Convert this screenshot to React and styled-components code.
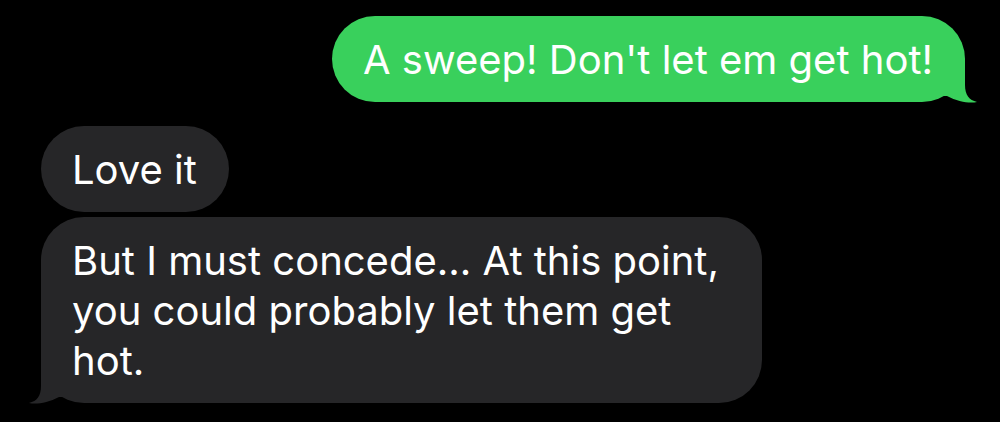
import React from 'react';
import styled, { createGlobalStyle } from 'styled-components';

const GlobalStyle = createGlobalStyle`
  html, body {
    margin: 0;
    padding: 0;
    background: #000;
  }
`;

const Thread = styled.div`
  width: 1000px;
  height: 422px;
  box-sizing: border-box;
  padding: 16px 35px 0 41px;
  display: flex;
  flex-direction: column;
  font-family: Inter, "Liberation Sans", Arial, sans-serif;
  overflow: hidden;
`;

const Row = styled.div`
  display: flex;
  justify-content: ${({ sent }) => (sent ? 'flex-end' : 'flex-start')};
  margin-top: ${({ gap }) => gap || 0}px;
`;

const Bubble = styled.div`
  position: relative;
  box-sizing: border-box;
  max-width: 721px;
  padding: 19px 32px 17px 31px;
  border-radius: 43px;
  background: ${({ sent }) => (sent ? '#39d05c' : '#262628')};
  color: #fff;
  font-size: 40px;
  line-height: 50px;
`;

const Tail = styled.svg`
  position: absolute;
  bottom: -1px;
  width: 36px;
  height: 44px;
  ${({ sent }) => (sent ? 'right: -14px;' : 'left: -14px; transform: scaleX(-1);')}
`;

const BubbleTail = ({ sent }) => (
  <Tail sent={sent} viewBox="0 0 36 44">
    <path
      d="M0 0 L22 0 L22 26 C22 36 26 41 34 43 C27 44.5 15 43 4 37 L0 37 Z"
      fill={sent ? '#39d05c' : '#262628'}
    />
  </Tail>
);

const Message = ({ sent, tail, children }) => (
  <Bubble sent={sent}>
    {children}
    {tail && <BubbleTail sent={sent} />}
  </Bubble>
);

export default function App() {
  return (
    <>
      <GlobalStyle />
      <Thread>
        <Row sent>
          <Message sent tail>A sweep! Don't let em get hot!</Message>
        </Row>
        <Row gap={24}>
          <Message>Love it</Message>
        </Row>
        <Row gap={5}>
          <Message tail>But I must concede... At this point, you could probably let them get hot.</Message>
        </Row>
      </Thread>
    </>
  );
}
